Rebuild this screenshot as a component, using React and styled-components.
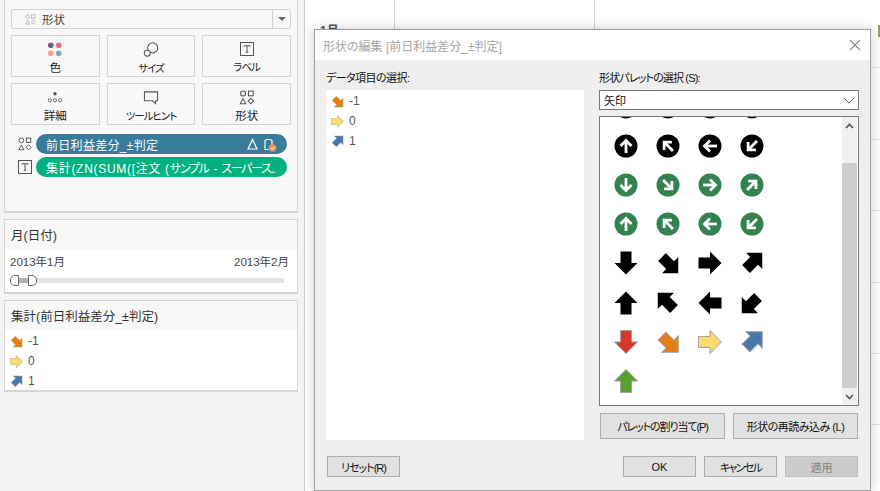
import styled, { createGlobalStyle } from "styled-components";

const GlobalStyle = createGlobalStyle`
  html, body {
    margin: 0;
    padding: 0;
    overflow: hidden;
    background: #fff;
  }
  * {
    box-sizing: border-box;
  }
`

const FONT = `"Liberation Sans", "Noto Sans CJK JP", sans-serif`

const BLACK = { fill: "#000", edge: "none" }
const GREEN = "#34824f"

// rows of the shape palette, from the top of the scrolled list
const paletteRows = [
  { kind: "circle", color: "#000", angles: [180, 135, 90, 45] },
  { kind: "circle", color: "#000", angles: [0, -45, -90, -135] },
  { kind: "circle", color: GREEN, angles: [180, 135, 90, 45] },
  { kind: "circle", color: GREEN, angles: [0, -45, -90, -135] },
  { kind: "block", ...BLACK, angles: [180, 135, 90, 45] },
  { kind: "block", ...BLACK, angles: [0, -45, -90, -135] },
]

const colouredArrows = [
  { fill: "#d9382a", angle: 180 },
  { fill: "#e57f14", angle: 135 },
  { fill: "#f8dc72", angle: 90 },
  { fill: "#4577b2", angle: 45 },
  { fill: "#5a9e2f", angle: 0 },
]

const legendItems = [
  { label: "-1", fill: "#e57f14", angle: 135 },
  { label: "0", fill: "#f8dc72", angle: 90 },
  { label: "1", fill: "#4577b2", angle: 45 },
]

// diagonal arrows sit a little further towards their tip than the straight ones
const arrowTransform = (angle) => {
  const rad = (angle * Math.PI) / 180
  const shift = angle % 90 === 0 ? 0 : 3
  const dx = (Math.sin(rad) * shift).toFixed(2)
  const dy = (-Math.cos(rad) * shift).toFixed(2)
  return `translate(${dx} ${dy}) rotate(${angle} 12 12)`
}

const BlockArrow = ({ fill, edge = "#a0a0a0", angle, size = 24 }) => (
  <svg width={size} height={size} viewBox="0 0 24 24">
    <polygon
      points="12,0.5 23.5,12 17.5,12 17.5,23.5 6.5,23.5 6.5,12 0.5,12"
      fill={fill}
      stroke={edge}
      strokeWidth={edge === "none" ? 0 : 1}
      transform={arrowTransform(angle)}
    />
  </svg>
)

const CircleArrow = ({ color, angle }) => (
  <svg width="24" height="24" viewBox="0 0 24 24">
    <circle cx="12" cy="12" r="11.5" fill={color} />
    <g transform={`rotate(${angle} 12 12)`} fill="none" stroke="#fff" strokeWidth="2.8">
      <line x1="12" y1="19" x2="12" y2="6.5" />
      <polyline points="6.5,12 12,6.5 17.5,12" />
    </g>
  </svg>
)

const ShapesIcon = ({ color = "#555", size = 16 }) => (
  <svg width={size} height={size} viewBox="0 0 16 16" fill="none" stroke={color} strokeWidth="1.1">
    <circle cx="3.8" cy="3.8" r="2.7" />
    <rect x="9.6" y="1.2" width="5" height="5" />
    <polygon points="3.8,9.2 6.7,14.6 0.9,14.6" />
    <polygon points="12.1,8.8 15,11.8 12.1,14.8 9.2,11.8" />
  </svg>
)

const LabelIcon = () => (
  <svg width="14" height="14" viewBox="0 0 14 14" fill="none" stroke="#555">
    <rect x="0.5" y="0.5" width="13" height="13" />
    <path d="M4 4.5V3.8H10V4.5M7 3.8V10.2M5.8 10.2H8.2" strokeWidth="1" />
  </svg>
)

const App = () => {
  return (
    <Page>
      <GlobalStyle />
      <Sidebar>
        <MarksCard>
          <MarkSelect>
            <ShapesIcon color="#aaa" size={11} />
            <MarkSelectText>形状</MarkSelectText>
            <MarkSelectCaret />
          </MarkSelect>
          <MarkGrid>
            <MarkButton>
              <svg width="16" height="16" viewBox="0 0 16 16">
                <circle cx="3.5" cy="3.5" r="3" fill="#75598c" />
                <circle cx="12" cy="3.5" r="3" fill="#ee6a7c" />
                <circle cx="3.5" cy="12" r="3" fill="#f3a67a" />
                <circle cx="12" cy="12" r="3" fill="#7fa6cf" />
              </svg>
              色
            </MarkButton>
            <MarkButton $kana>
              <svg width="16" height="16" viewBox="0 0 16 16" fill="none" stroke="#555" strokeWidth="1.1">
                <circle cx="9.8" cy="6.3" r="5.4" />
                <circle cx="4" cy="12" r="3.2" fill="#fafafa" />
              </svg>
              サイズ
            </MarkButton>
            <MarkButton $kana>
              <LabelIcon />
              ラベル
            </MarkButton>
            <MarkButton>
              <svg width="16" height="16" viewBox="0 0 16 16">
                <circle cx="8" cy="4" r="1.8" fill="#555" />
                <g fill="none" stroke="#555" strokeWidth="0.9">
                  <circle cx="2.5" cy="11" r="1.7" />
                  <circle cx="8" cy="11" r="1.7" />
                  <circle cx="13.5" cy="11" r="1.7" />
                </g>
              </svg>
              詳細
            </MarkButton>
            <MarkButton $kana>
              <svg width="16" height="16" viewBox="0 0 16 16" fill="none" stroke="#555" strokeWidth="1.1">
                <path d="M1 2H15V11.5H13V14.5L9.5 11.5H1Z" />
              </svg>
              ツールヒント
            </MarkButton>
            <MarkButton>
              <ShapesIcon />
              形状
            </MarkButton>
          </MarkGrid>
          <PillList>
            <PillRow>
              <ShapesIcon />
              <Pill $color="#387b9b">
                <PillText>前日利益差分_±判定</PillText>
                <svg width="32" height="15" viewBox="0 0 32 15" fill="none" stroke="#fff" strokeWidth="1.2">
                  <polygon points="5.5,2.5 10,12 1,12" />
                  <path d="M18 4C18 2 25 2 25 4V8M18 4V12.5H21.5" />
                  <circle cx="25.5" cy="11" r="3.8" fill="#e9965a" stroke="none" />
                  <path d="M23.8 11L25.2 12.4L27.4 9.8" strokeWidth="0.9" />
                </svg>
              </Pill>
            </PillRow>
            <PillRow>
              <LabelIcon />
              <Pill $color="#01b180">
                <PillText $squeeze={0.7}>
                  集計(ZN(SUM([注文 (<KanaRun>サンプル - スーパース..</KanaRun>
                </PillText>
              </Pill>
            </PillRow>
          </PillList>
        </MarksCard>

        <Card>
          <CardHeader>月(日付)</CardHeader>
          <FilterBody>
            <DateRange>
              <span>2013年1月</span>
              <span>2013年2月</span>
            </DateRange>
            <SliderTrack>
              <SliderFill />
              <SliderHandle $side="left" />
              <SliderHandle $side="right" />
            </SliderTrack>
          </FilterBody>
        </Card>

        <Card>
          <CardHeader>集計(前日利益差分_±判定)</CardHeader>
          <LegendBody>
            {legendItems.map((item) => (
              <LegendRow key={item.label}>
                <BlockArrow fill={item.fill} angle={item.angle} size={13} edge="#b0a890" />
                {item.label}
              </LegendRow>
            ))}
          </LegendBody>
        </Card>
      </Sidebar>

      <Canvas>
        <MonthLabel>1月</MonthLabel>
      </Canvas>
      <EdgeMark />

      <Dialog>
        <TitleBar>
          形状の編集 [前日利益差分_±判定]
          <svg width="12" height="12" viewBox="0 0 12 12" stroke="#8a8a8a" strokeWidth="1.1">
            <path d="M1 1L11 11M11 1L1 11" />
          </svg>
        </TitleBar>
        <DialogBody>
          <Columns>
            <LeftColumn>
              <FieldLabel $squeeze={-0.55}>データ項目の選択:</FieldLabel>
              <ItemList>
                {legendItems.map((item) => (
                  <LegendRow key={item.label}>
                    <BlockArrow fill={item.fill} angle={item.angle} size={13} edge="#b0a890" />
                    {item.label}
                  </LegendRow>
                ))}
              </ItemList>
            </LeftColumn>
            <RightColumn>
              <FieldLabel $squeeze={-0.85}>形状パレットの選択 (S):</FieldLabel>
              <PaletteSelect>
                矢印
                <svg width="12" height="7" viewBox="0 0 12 7" fill="none" stroke="#666">
                  <path d="M1 1L6 6L11 1" />
                </svg>
              </PaletteSelect>
              <PaletteBox>
                <ShapeArea>
                  <ShapeGrid>
                    {paletteRows.map((row, r) =>
                      row.angles.map((angle) => (
                        <ShapeCell key={`${r}-${angle}`}>
                          {row.kind === "circle" ? (
                            <CircleArrow color={row.color} angle={angle} />
                          ) : (
                            <BlockArrow fill={row.fill} edge={row.edge} angle={angle} />
                          )}
                        </ShapeCell>
                      ))
                    )}
                    {colouredArrows.map((arrow) => (
                      <ShapeCell key={arrow.fill}>
                        <BlockArrow fill={arrow.fill} angle={arrow.angle} />
                      </ShapeCell>
                    ))}
                  </ShapeGrid>
                </ShapeArea>
                <ScrollBar>
                  <ScrollButton>
                    <svg width="9" height="6" viewBox="0 0 9 6" fill="none" stroke="#555" strokeWidth="1.6">
                      <path d="M1 5L4.5 1.5L8 5" />
                    </svg>
                  </ScrollButton>
                  <ScrollThumb />
                  <ScrollButton>
                    <svg width="9" height="6" viewBox="0 0 9 6" fill="none" stroke="#555" strokeWidth="1.6">
                      <path d="M1 1L4.5 4.5L8 1" />
                    </svg>
                  </ScrollButton>
                </ScrollBar>
              </PaletteBox>
              <PaletteActions>
                <DialogButton $squeeze={-1.1}>パレットの割り当て(P)</DialogButton>
                <DialogButton $squeeze={-0.5}>形状の再読み込み (L)</DialogButton>
              </PaletteActions>
            </RightColumn>
          </Columns>
          <Footer>
            <FooterButton $squeeze={-1}>リセット(R)</FooterButton>
            <FooterRight>
              <FooterButton>OK</FooterButton>
              <FooterButton $squeeze={-1.7}>キャンセル</FooterButton>
              <FooterButton $disabled>適用</FooterButton>
            </FooterRight>
          </Footer>
        </DialogBody>
      </Dialog>
    </Page>
  )
}

const Page = styled.div`
  position: relative;
  display: flex;
  width: 880px;
  height: 491px;
  overflow: hidden;
  font-family: ${FONT};
  font-feature-settings: "palt";
  font-size: 12px;
  color: #333;
`

const Sidebar = styled.div`
  width: 305px;
  flex-shrink: 0;
  display: flex;
  flex-direction: column;
  gap: 6px;
  padding: 0 6px 0 4px;
  background: #f4f4f4;
  border-right: 1px solid #cfcfcf;
`

const MarksCard = styled.div`
  height: 213px;
  padding: 9px 6px 0;
  background: #f8f8f8;
  border: 2px solid #d4d4d4;
  border-width: 0 1px 2px 1px;
`

const MarkSelect = styled.div`
  position: relative;
  display: flex;
  align-items: center;
  gap: 6px;
  height: 20px;
  padding-left: 13px;
  border: 1px solid #d4d4d4;
  border-radius: 2px;
`

const MarkSelectText = styled.span`
  font-size: 11.5px;
  color: #444;
`

const MarkSelectCaret = styled.span`
  position: absolute;
  top: 0;
  right: 0;
  width: 18px;
  height: 18px;
  border-left: 1px solid #d4d4d4;
  &::after {
    content: "";
    position: absolute;
    top: 7px;
    left: 5px;
    border: 4px solid transparent;
    border-top: 4px solid #666;
    border-bottom: 0;
  }
`

const MarkGrid = styled.div`
  display: grid;
  grid-template-columns: repeat(3, 1fr);
  grid-auto-rows: 42px;
  gap: 6px 7px;
  margin-top: 6px;
`

const MarkButton = styled.div`
  display: flex;
  flex-direction: column;
  align-items: center;
  gap: 4px;
  padding-top: 6px;
  border: 1px solid #d4d4d4;
  font-size: ${(props) => (props.$kana ? "10.5px" : "11.5px")};
  letter-spacing: ${(props) => (props.$kana ? "-1px" : "0")};
  color: #222;
  line-height: 15px;
`

const PillList = styled.div`
  display: flex;
  flex-direction: column;
  gap: 3px;
  margin: 9px 4px 0 7px;
`

const PillRow = styled.div`
  display: flex;
  align-items: center;
  gap: 4px;
  height: 20px;
  > svg {
    flex-shrink: 0;
    width: 14px;
  }
`

const Pill = styled.div`
  flex: 1;
  min-width: 0;
  display: flex;
  align-items: center;
  justify-content: space-between;
  height: 20px;
  padding: 0 8px 0 10px;
  border-radius: 10px;
  background: ${(props) => props.$color};
  color: #fff;
`

const PillText = styled.span`
  white-space: nowrap;
  font-size: 12px;
  letter-spacing: ${(props) => props.$squeeze ?? 0.3}px;
`

const KanaRun = styled.span`
  letter-spacing: -1.3px;
  word-spacing: 3px;
`

const Card = styled.div`
  background: #fff;
  border: 1px solid #d4d4d4;
  border-width: 1px 1px 2px 1px;
`

const CardHeader = styled.div`
  height: 29px;
  padding: 5px 6px 0;
  background: #f8f8f8;
  font-size: 12.5px;
  color: #333;
`

const FilterBody = styled.div`
  height: 43px;
  padding: 5px 5px 0;
`

const DateRange = styled.div`
  display: flex;
  justify-content: space-between;
  padding-right: 3px;
  font-size: 11.5px;
  line-height: 16px;
  color: #444;
`

const SliderTrack = styled.div`
  position: relative;
  width: 274px;
  height: 5px;
  margin-top: 8px;
  background: #e4e4e4;
`

const SliderFill = styled.div`
  position: absolute;
  left: 4px;
  width: 22px;
  height: 5px;
  background: #b4b4b4;
`

const SliderHandle = styled.div`
  position: absolute;
  top: -3px;
  left: ${(props) => (props.$side === "left" ? "0" : "18px")};
  width: 9px;
  height: 11px;
  background: #fff;
  border: 1px solid #666;
  border-radius: ${(props) => (props.$side === "left" ? "5px 0 0 5px" : "0 5px 5px 0")};
`

const LegendBody = styled.div`
  height: 60px;
  padding: 1px 0 0 5px;
`

const LegendRow = styled.div`
  display: flex;
  align-items: center;
  gap: 5px;
  height: 20px;
  font-size: 12px;
  color: #555;
`

const Canvas = styled.div`
  flex: 1;
  padding: 21px 0 0 15px;
  background-color: #fff;
  background-image:
    repeating-linear-gradient(90deg, transparent 0 199px, #d4d4d4 199px 200px),
    repeating-linear-gradient(transparent 0 70.4px, #e0e0e0 70.4px 71.4px);
  background-position: -110px 0, 89px -3px;
  background-size: 100% 100%, 100% 100%;
  background-repeat: repeat, no-repeat;
  font-size: 12px;
  font-weight: bold;
`

const MonthLabel = styled.div`
  color: #555;
`

const EdgeMark = styled.div`
  position: absolute;
  right: 0;
  top: 25px;
  width: 2px;
  height: 12px;
  background: #a09c6c;
`

const Dialog = styled.div`
  position: absolute;
  left: 314px;
  top: 29px;
  width: 557px;
  height: 462px;
  display: flex;
  flex-direction: column;
  background: #efefef;
  border: 1px solid #a0a0a0;
  box-shadow: 0 0 12px rgba(0, 0, 0, 0.2);
`

const TitleBar = styled.div`
  flex-shrink: 0;
  display: flex;
  align-items: center;
  justify-content: space-between;
  height: 30px;
  padding: 0 9px 0 8px;
  background: #fff;
  font-size: 12px;
  color: #a6a6a6;
`

const DialogBody = styled.div`
  flex: 1;
  display: flex;
  flex-direction: column;
  padding: 11px 11px 0;
`

const Columns = styled.div`
  display: flex;
  gap: 15px;
  height: 369px;
`

const LeftColumn = styled.div`
  width: 258px;
  display: flex;
  flex-direction: column;
`

const RightColumn = styled.div`
  width: 260px;
  display: flex;
  flex-direction: column;
`

const FieldLabel = styled.div`
  height: 14px;
  margin-bottom: 5px;
  font-size: 11px;
  line-height: 14px;
  letter-spacing: ${(props) => props.$squeeze}px;
  color: #111;
`

const ItemList = styled.div`
  flex: 1;
  padding: 1px 5px;
  background: #fff;
`

const PaletteSelect = styled.div`
  display: flex;
  align-items: center;
  justify-content: space-between;
  height: 20px;
  padding: 0 3px 0 4px;
  background: #fff;
  border: 1px solid #7a7a7a;
  font-size: 11px;
  color: #111;
`

const PaletteBox = styled.div`
  display: flex;
  height: 290px;
  margin-top: 6px;
  padding-right: 1px;
  background: #fff;
  border: 1px solid #7a7a7a;
`

const ShapeArea = styled.div`
  flex: 1;
  overflow: hidden;
  padding-left: 5px;
`

const ShapeGrid = styled.div`
  display: grid;
  grid-template-columns: repeat(4, 42px);
  grid-auto-rows: 39.2px;
  margin-top: -30px;
`

const ShapeCell = styled.div`
  display: flex;
  align-items: center;
  justify-content: center;
`

const ScrollBar = styled.div`
  width: 15px;
  display: flex;
  flex-direction: column;
  background: #f0f0f0;
`

const ScrollButton = styled.div`
  height: 17px;
  flex-shrink: 0;
  display: flex;
  align-items: center;
  justify-content: center;
`

const ScrollThumb = styled.div`
  flex: 1;
  margin: 29px 0 0;
  background: #cdcdcd;
`

const PaletteActions = styled.div`
  display: flex;
  justify-content: space-between;
  margin-top: 7px;
  padding: 0 1px;
`

const DialogButton = styled.div`
  display: flex;
  align-items: center;
  justify-content: center;
  width: 125px;
  height: 26px;
  background: #e1e1e1;
  border: 1px solid #adadad;
  font-size: 11px;
  letter-spacing: ${(props) => props.$squeeze}px;
  color: #111;
  white-space: nowrap;
`

const Footer = styled.div`
  display: flex;
  justify-content: space-between;
  margin-top: 16px;
  padding: 0 1px;
`

const FooterRight = styled.div`
  display: flex;
  gap: 8px;
`

const FooterButton = styled.div`
  display: flex;
  align-items: center;
  justify-content: center;
  width: 73px;
  height: 21px;
  background: ${(props) => (props.$disabled ? "#cccccc" : "#e1e1e1")};
  border: 1px solid ${(props) => (props.$disabled ? "#bfbfbf" : "#adadad")};
  font-size: 11px;
  letter-spacing: ${(props) => props.$squeeze ?? 0}px;
  color: ${(props) => (props.$disabled ? "#808080" : "#111")};
`

export default App
